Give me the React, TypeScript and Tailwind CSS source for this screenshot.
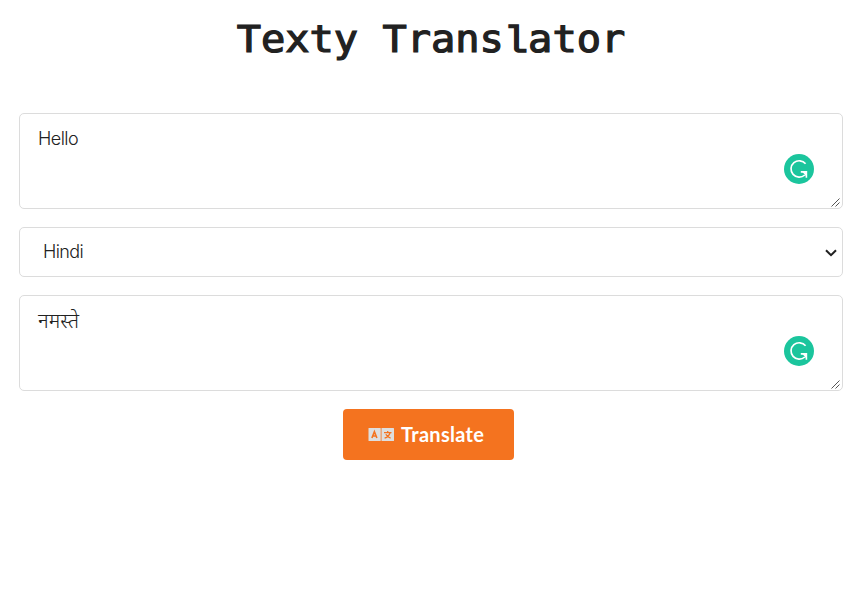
import React from "react";

function AssistantBadge() {
  return (
    <svg viewBox="0 0 30 30" className="pointer-events-none absolute right-7 bottom-6 size-[30px]" aria-hidden="true">
      <circle cx="15" cy="15" r="15" fill="#1bc59d" />
      <path d="M21.6 9.8A8.2 8.2 0 1 0 20.8 21" fill="none" stroke="#fff" strokeWidth="1.7" />
      <path d="M16.8 17.9H22.4V23.8" fill="none" stroke="#fff" strokeWidth="1.6" />
      <path d="M18.4 17.9H22.4V22.4Z" fill="#fff" />
    </svg>
  );
}

function ResizeGrip() {
  return (
    <svg viewBox="0 0 9 9" className="absolute right-0.5 bottom-px size-[9px]" aria-hidden="true">
      <path d="M0.5 8.5L8.5 0.5M4.5 8.5L8.5 4.5" fill="none" stroke="#555" strokeWidth="1" />
    </svg>
  );
}

function TextBox({ children }: { children: React.ReactNode }) {
  return (
    <div className="relative h-24 rounded-[5px] border border-[#dcdcdc] px-[18px] pt-3 text-lg leading-[26px]">
      {children}
      <AssistantBadge />
      <ResizeGrip />
    </div>
  );
}

function LanguageIcon() {
  return (
    <svg viewBox="0 0 26 13" className="h-[13px] w-[26px]" aria-hidden="true">
      <rect x="0.5" width="12.2" height="13" rx="0.5" fill="#dedede" />
      <rect x="13.5" width="12.5" height="13" rx="0.5" fill="#dedede" />
      <path d="M3.9 10L6.4 3.6L8.9 10M4.7 8H8.1" fill="none" stroke="#f4731f" strokeWidth="1.6" />
      <path d="M16 4.7H23.5M19.7 3V4.7M22 5C21.3 7.3 19.4 9.2 16.6 10.2M17.8 6.3C18.8 8.3 20.5 9.5 22.6 10.2" fill="none" stroke="#f4731f" strokeWidth="1.3" />
    </svg>
  );
}

export default function App() {
  return (
    <main className="h-[599px] bg-white pr-[22px] pl-[19px] font-['Inter','Noto_Sans',sans-serif] font-light text-[#212121]">
      <h1 className="h-[113px] scale-x-[1.09] pt-[15px] text-center font-['DejaVu_Sans_Mono',monospace] text-[37px] leading-[50px] font-normal [-webkit-text-stroke:1.2px_#212121]">
        Texty Trans<span className="font-['Liberation_Mono',monospace] text-[37.1px] font-normal [-webkit-text-stroke:1.3px_#212121]">l</span>ator
      </h1>
      <div className="flex flex-col gap-[18px]">
        <TextBox><span className="tracking-[-0.55px]">Hello</span></TextBox>
        <div className="flex h-[50px] items-center justify-between rounded-[5px] border border-[#dcdcdc] pr-[5px] pl-[23px] text-lg">
          <span className="tracking-[-0.6px]">Hindi</span>
          <svg viewBox="0 0 12 8" className="mt-px h-2 w-3" aria-hidden="true">
            <path d="M1 1.2L6 6.2L11 1.2" fill="none" stroke="#212121" strokeWidth="2" />
          </svg>
        </div>
        <TextBox><span className="block font-['Noto_Sans',sans-serif] text-[20.4px] leading-[24px]">नमस्ते</span></TextBox>
      </div>
      <button className="mt-[18px] ml-[324px] flex h-[51px] w-[171px] items-center rounded-[4px] bg-[#f4731f] pl-[25px] font-['Lato',sans-serif] text-xl font-bold text-white">
        <LanguageIcon />
        <span className="mb-0.5 ml-[7px] tracking-[0.3px]">Translate</span>
      </button>
    </main>
  );
}
